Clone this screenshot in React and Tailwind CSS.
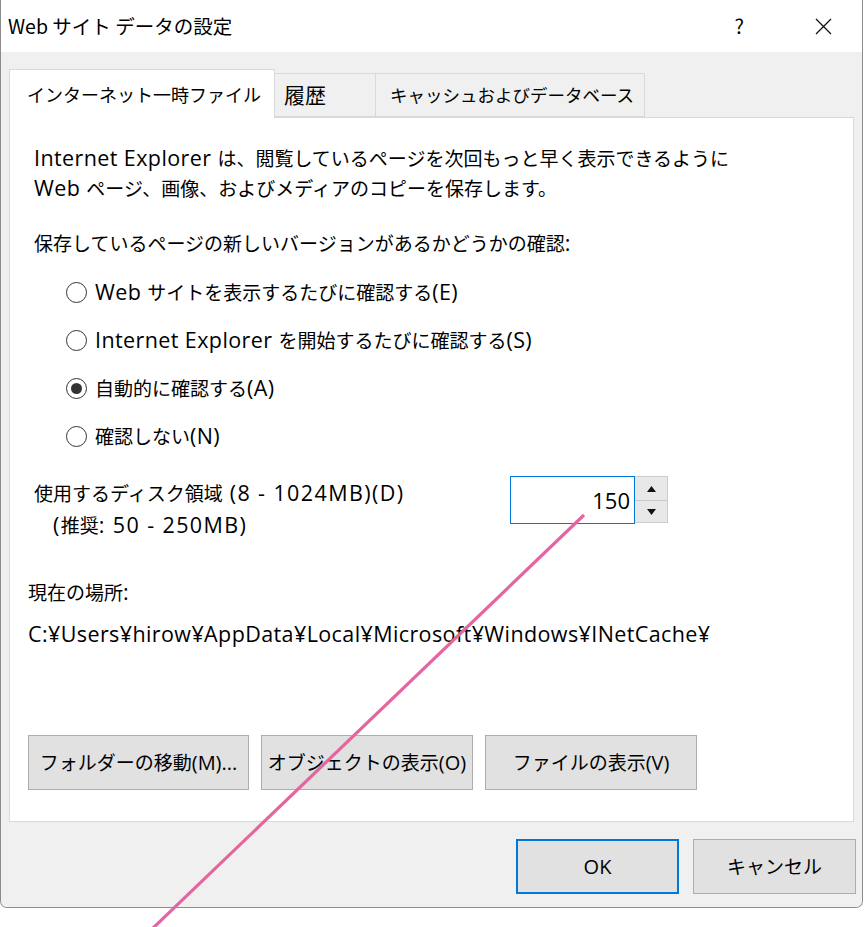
import React from "react";

const FONT = { fontFamily: '"Noto Sans CJK JP", sans-serif' };

function T({ children, size = "md" }) {
  const parts = String(children).split(/([\x20-\x7E¥]+)/);
  const cls =
    size === "md"
      ? "font-['Open_Sans',sans-serif] text-[21.5px] tracking-[0.4px]"
      : size === "wide"
      ? "font-['Open_Sans',sans-serif] text-[21.5px] tracking-[1.4px]"
      : "font-['Open_Sans',sans-serif] text-[20px]";
  return (
    <>
      {parts.map((p, i) =>
        p === "" ? null : /^[\x20-\x7E¥]+$/.test(p) ? (
          <span key={i} className={cls}>{p}</span>
        ) : (
          <span key={i}>{p}</span>
        )
      )}
    </>
  );
}

function Radio({ checked, label }) {
  return (
    <div className="flex items-center h-[48px]">
      <div className="ml-[32px] w-[21px] h-[21px] rounded-full border border-[#333333] bg-white flex items-center justify-center">
        {checked && <div className="w-[11px] h-[11px] rounded-full bg-[#333333]" />}
      </div>
      <span className="ml-[8px] text-[19px] leading-[30px] text-black whitespace-nowrap"><T>{label}</T></span>
    </div>
  );
}

export default function App() {
  return (
    <div className="relative w-[865px] h-[927px] bg-white overflow-hidden" style={FONT}>
      <div className="w-[863px] h-[908px] border-x border-b border-[#8c8c8c] rounded-b-[7px] flex flex-col overflow-hidden">
        {/* title bar */}
        <div className="h-[52px] bg-white flex items-center pl-[7px] shrink-0">
          <span className="text-[19.5px] text-black">Web サイト データの設定</span>
          <span className="ml-auto mr-[71px] text-[20px] text-black">?</span>
          <svg width="17" height="17" viewBox="0 0 17 17" className="mr-[30px]">
            <path d="M1 1 L16 16 M16 1 L1 16" stroke="#111" strokeWidth="1.3" />
          </svg>
        </div>
        {/* body */}
        <div className="flex-1 bg-[#f0f0f0] px-[8px] pt-[17px] flex flex-col">
          {/* tabs */}
          <div className="flex items-end h-[48px]">
            <div className="relative z-10 w-[266px] h-[49px] -mb-px bg-white border border-b-0 border-[#d9d9d9] flex items-center pl-[17px] text-[18px] text-black">
              インターネット一時ファイル
            </div>
            <div className="w-[101px] h-[44px] border border-l-0 border-[#d9d9d9] bg-[#f0f0f0] flex items-center pl-[9px] text-[21px] text-black">
              履歴
            </div>
            <div className="w-[269px] h-[44px] border border-l-0 border-[#d9d9d9] bg-[#f0f0f0] flex items-center pl-[14px] text-[17.5px] text-black">
              キャッシュおよびデータベース
            </div>
          </div>
          {/* panel */}
          <div className="h-[705px] bg-white border border-[#d9d9d9] pl-[24px] pt-[25px] flex flex-col text-black">
            <div className="text-[19px] leading-[30px] whitespace-nowrap"><T>Internet Explorer は、閲覧しているページを次回もっと早く表示できるように</T></div>
            <div className="text-[19px] leading-[30px] whitespace-nowrap"><T>Web ページ、画像、およびメディアのコピーを保存します。</T></div>
            <div className="mt-[25px] text-[19px] leading-[30px]"><T>保存しているページの新しいバージョンがあるかどうかの確認:</T></div>
            <div className="mt-[10px] flex flex-col">
              <Radio label="Web サイトを表示するたびに確認する(E)" />
              <Radio label="Internet Explorer を開始するたびに確認する(S)" />
              <Radio checked label="自動的に確認する(A)" />
              <Radio label="確認しない(N)" />
            </div>
            <div className="mt-[17px] flex items-start">
              <div className="w-[476px] flex flex-col">
                <div className="text-[19px] leading-[32px] whitespace-nowrap"><T size="wide">使用するディスク領域 (8 - 1024MB)(D)</T></div>
                <div className="pl-[19px] text-[19px] leading-[32px]"><T size="wide">(推奨: 50 - 250MB)</T></div>
              </div>
              <div className="-mt-[1px] flex">
                <div className="w-[125px] h-[48px] border border-[#0078d7] flex items-center justify-end pr-[4px] text-[22px] font-['Open_Sans',sans-serif]">
                  150
                </div>
                <div className="w-[33px] h-[47px] border border-l-0 border-[#cccccc] bg-[#f0f0f0] flex flex-col">
                  <div className="h-[24px] bg-[#e8e8e8] border-b border-[#c8c8c8] flex items-center justify-center">
                    <svg width="9" height="6" viewBox="0 0 9 6"><path d="M4.5 0 L9 6 L0 6 Z" fill="#111" /></svg>
                  </div>
                  <div className="flex-1 bg-[#e8e8e8] flex items-center justify-center">
                    <svg width="9" height="6" viewBox="0 0 9 6"><path d="M0 0 L9 0 L4.5 6 Z" fill="#111" /></svg>
                  </div>
                </div>
              </div>
            </div>
            <div className="-ml-[6px] mt-[36px] text-[19px] leading-[30px]"><T>現在の場所:</T></div>
            <div className="-ml-[6px] mt-[12px] text-[19px] leading-[30px] whitespace-nowrap"><T>C:¥Users¥hirow¥AppData¥Local¥Microsoft¥Windows¥INetCache¥</T></div>
            <div className="-ml-[6px] mt-[86px] flex gap-[12px]">
              <div className="w-[221px] h-[55px] bg-[#e1e1e1] border border-[#adadad] flex items-center justify-center text-[19px] whitespace-nowrap"><T size="sm">フォルダーの移動(M)...</T></div>
              <div className="w-[212px] h-[55px] bg-[#e1e1e1] border border-[#adadad] flex items-center justify-center text-[19px] whitespace-nowrap"><T size="sm">オブジェクトの表示(O)</T></div>
              <div className="w-[212px] h-[55px] bg-[#e1e1e1] border border-[#adadad] flex items-center justify-center text-[19px] whitespace-nowrap"><T size="sm">ファイルの表示(V)</T></div>
            </div>
          </div>
          {/* dialog buttons */}
          <div className="mt-[17px] -mr-[2px] flex justify-end gap-[14px]">
            <div className="w-[163px] h-[55px] bg-[#e1e1e1] border-2 border-[#0078d7] flex items-center justify-center text-[20px] text-black font-['Open_Sans',sans-serif]">OK</div>
            <div className="w-[163px] h-[55px] bg-[#e1e1e1] border border-[#adadad] flex items-center justify-center text-[19px] text-black">キャンセル</div>
          </div>
        </div>
      </div>
      {/* annotation line */}
      <svg className="absolute inset-0 pointer-events-none" width="865" height="927" viewBox="0 0 865 927">
        <line x1="584" y1="515" x2="151" y2="930" stroke="#e4669e" strokeWidth="3.2" />
      </svg>
    </div>
  );
}
